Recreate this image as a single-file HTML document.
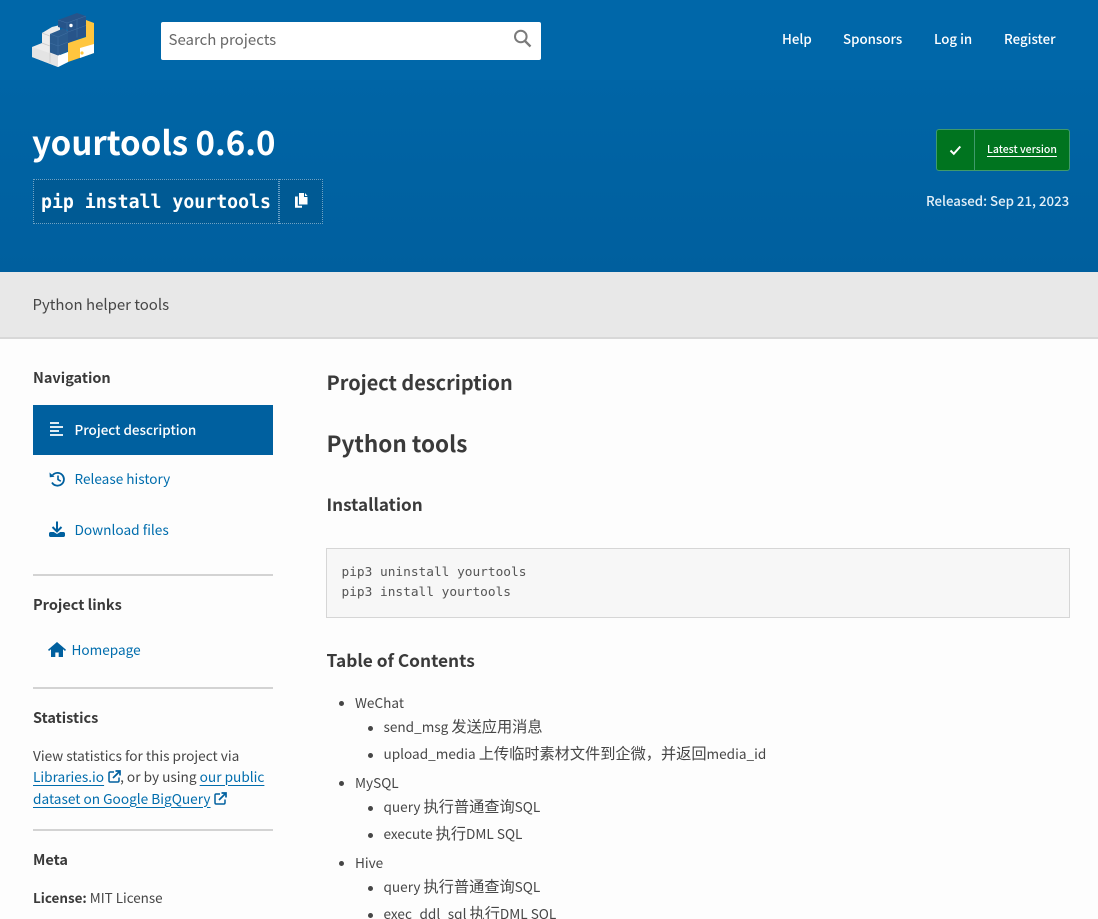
<!DOCTYPE html>
<html lang="en"><head><meta charset="utf-8"><title>yourtools</title>
<style>
html,body{margin:0;padding:0;width:1098px;height:919px;overflow:hidden;background:#fdfdfd}
body{position:relative;font-family:"Noto Sans CJK SC","Liberation Sans",sans-serif;color:#464646}
.t{position:absolute;white-space:nowrap;line-height:24px;height:24px}
.abs{position:absolute}
.b{font-weight:700}
.link{color:#006dad}
.nav{color:#fff;font-size:13.300px;font-weight:500;top:27px}
.side{font-size:14.500px;font-weight:700;color:#3a3a3a}
.li{font-size:13.600px;color:#464646}
.c{font-size:15.200px}
.hr{position:absolute;left:33px;width:240px;height:2px;background:#d3d3d3}
.dot{position:absolute;width:5px;height:5px;border-radius:50%;background:#464646}
u{text-underline-offset:3px;text-decoration-thickness:1px}
</style></head><body>
<div class="abs" style="left:0;top:0;width:1098px;height:80px;background:#0067a9"></div>
<div class="abs" style="left:0;top:80px;width:1098px;height:192px;background:linear-gradient(#0065a6,#005f9e)"></div>
<div class="abs" style="left:0;top:272px;width:1098px;height:65px;background:#e8e8e8"></div>
<div class="abs" style="left:0;top:337px;width:1098px;height:2px;background:#d8d8d8"></div>

<svg class="abs" style="left:28px;top:8px" width="70" height="64" viewBox="28 8 70 64">
<polygon points="32,47 42,43 42,33 52,27 60,25 60,55 68,52 68,62 58,67 32,57" fill="#ececec"/>
<polygon points="32,47 58,56 58,67 32,57" fill="#e4e4e4"/>
<polygon points="58,56 68,52 68,62 58,67" fill="#fff"/>
<path d="M42 43l8 3v17M42 33l8 3v10" stroke="#c9c9c9" stroke-width=".7" fill="none"/>
<polygon points="86,20 94,23 94,53 68,62 68,43 86,37" fill="#ffc63f"/>
<polygon points="80,48 94,44 94,53 80,58" fill="#fff"/>
<polygon points="58,20 77,13 86,16 86,36 68,43 68,30 58,27" fill="#27548a"/>
<polygon points="50,34 63,28.500 68,31 68,51 58,55.500 50,52.500" fill="#2b5b8e"/>
<path d="M50 34l8 3v18M58 37l10-4.500M50 43l8 3 10-4M58 20l9 3v9M67 23l19-7M77 19.500v18M68 32l18-6.500" stroke="#4172a5" stroke-width=".5" fill="none"/>
<circle cx="71" cy="25.500" r="1.700" fill="#fff"/><circle cx="82" cy="53" r="1.600" fill="#ffc63f"/>
</svg>

<div class="abs" style="left:161px;top:22px;width:380px;height:38px;background:#fff;border-radius:2px"></div>
<div class="t" style="left:168.500px;top:27.500px;font-size:15px;color:#686868">Search projects</div>
<svg class="abs" style="left:513px;top:29px" width="19" height="19" viewBox="0 0 19 19"><circle cx="7.800" cy="7.500" r="5.800" fill="none" stroke="#7b7b7b" stroke-width="2"/><path d="M12 12l5.500 5.500" stroke="#7b7b7b" stroke-width="2.300"/></svg>

<div class="t nav" style="left:782px">Help</div>
<div class="t nav" style="left:843px">Sponsors</div>
<div class="t nav" style="left:934px">Log in</div>
<div class="t nav" style="left:1004px">Register</div>

<div class="t b" style="left:32px;top:121px;height:40px;line-height:40px;font-size:33px;color:#fff;font-weight:700">yourtools 0.6.0</div>

<div class="abs" style="left:33px;top:179px;width:246px;height:45px;background:#005a94;border:1px dotted #6fa3c7;box-sizing:border-box"></div>
<div class="abs" style="left:279px;top:179px;width:44px;height:45px;background:#005a94;border:1px dotted #6fa3c7;box-sizing:border-box"></div>
<div class="t" style="left:41px;top:191px;font-family:'DejaVu Sans Mono',monospace;font-size:18.200px;font-weight:700;color:#fff">pip install yourtools</div>
<svg class="abs" style="left:294px;top:193px" width="14" height="16" viewBox="0 0 14 16"><path d="M5 0h5v4h3.500v7.500H5z" fill="#fff"/><path d="M11 0l2.500 3H11z" fill="#fff"/><path d="M3.800 3.500H1v11.200h7V12.800H3.800z" fill="#fff"/></svg>

<div class="abs" style="left:936px;top:129px;width:134px;height:42px;background:#00741f;border:1px solid #3f9a6b;box-sizing:border-box;border-radius:3px"></div>
<div class="abs" style="left:974px;top:130px;width:1px;height:40px;background:#3f9a6b"></div>
<svg class="abs" style="left:949px;top:144px" width="13" height="12" viewBox="0 0 13 12"><path d="M1.500 6.500l3.300 3.300 6.500-7.300" fill="none" stroke="#fff" stroke-width="2"/></svg>
<div class="t" style="left:987px;top:137.500px;font-size:10.500px;color:#fff;font-weight:500"><u>Latest version</u></div>
<div class="t" style="left:926px;top:188.500px;font-size:13.250px;color:#e4f0f8;font-weight:500">Released: Sep 21, 2023</div>

<div class="t" style="left:32.500px;top:293px;font-size:14.960px;color:#464646">Python helper tools</div>

<div class="t side" style="left:33px;top:365.500px">Navigation</div>
<div class="abs" style="left:33px;top:405px;width:240px;height:50px;background:#00609f"></div>
<svg class="abs" style="left:50px;top:422px" width="15" height="14" viewBox="0 0 15 14"><path d="M0 1h9M0 5h13M0 9h9M0 13h13" stroke="#fff" stroke-width="1.700"/></svg>
<div class="t" style="left:74.500px;top:417px;font-size:13.440px;color:#fff;font-weight:500">Project description</div>

<svg class="abs" style="left:49px;top:471px" width="17" height="16" viewBox="0 0 17 16"><path d="M3.600 4.200A6.400 6.400 0 1 1 3 11.500" fill="none" stroke="#00609f" stroke-width="1.800"/><path d="M0.500 1.500l.3 4.700 4.700-.4z" fill="#00609f"/><path d="M9 4.500v4l2.800 1.700" fill="none" stroke="#00609f" stroke-width="1.600"/></svg>
<div class="t link" style="left:74.500px;top:466px;font-size:13.600px">Release history</div>

<svg class="abs" style="left:49px;top:521px" width="16" height="17" viewBox="0 0 16 17"><path d="M8 0.500v9" stroke="#00609f" stroke-width="2"/><path d="M3.500 6l4.500 4.500L12.500 6" fill="none" stroke="#00609f" stroke-width="2"/><path d="M1.500 11h3.300l3.200 2 3.200-2h3.300c.8 0 1.500.7 1.500 1.500v2c0 .8-.7 1.500-1.500 1.500h-13C.7 16 0 15.300 0 14.500v-2C0 11.700.7 11 1.500 11z" fill="#00609f"/></svg>
<div class="t link" style="left:74.500px;top:516.500px;font-size:13.700px">Download files</div>

<div class="hr" style="top:574px"></div>
<div class="t side" style="left:33px;top:593px">Project links</div>
<svg class="abs" style="left:48px;top:642px" width="18" height="15" viewBox="0 0 18 15"><path d="M9 0L0 7.800l1 1.200 2-1.700V15h4.300v-4.500h3.400V15H15V7.300l2 1.700 1-1.200z" fill="#00609f"/></svg>
<div class="t link" style="left:71.500px;top:636.500px;font-size:13.600px">Homepage</div>

<div class="hr" style="top:687px"></div>
<div class="t side" style="left:33px;top:706px">Statistics</div>
<div class="t li" style="left:33px;top:742.500px;font-size:13.670px">View statistics for this project via</div>
<div class="t li" style="left:33px;top:763.500px;font-size:13.670px"><span class="link"><u>Libraries.io<span style="display:inline-block;width:16px"></span></u></span>, or by using <span class="link"><u>our public</u></span></div>
<div class="t link" style="left:33px;top:785.500px;font-size:13.670px"><u>dataset on Google BigQuery<span style="display:inline-block;width:18px"></span></u></div>
<svg class="abs" style="left:108px;top:770px" width="13" height="13" viewBox="0 0 13 13"><path d="M6 2H2.200C1.500 2 1 2.500 1 3.200v7.600C1 11.500 1.500 12 2.200 12h7.600c.7 0 1.200-.5 1.200-1.200V7.500" fill="none" stroke="#00609f" stroke-width="1.500"/><path d="M5 8l6-6M7.500 1H12v4.500" fill="none" stroke="#00609f" stroke-width="1.700"/></svg>
<svg class="abs" style="left:214px;top:792px" width="13" height="13" viewBox="0 0 13 13"><path d="M6 2H2.200C1.500 2 1 2.500 1 3.200v7.600C1 11.500 1.500 12 2.200 12h7.600c.7 0 1.200-.5 1.200-1.200V7.500" fill="none" stroke="#00609f" stroke-width="1.500"/><path d="M5 8l6-6M7.500 1H12v4.500" fill="none" stroke="#00609f" stroke-width="1.700"/></svg>

<div class="hr" style="top:829px"></div>
<div class="t side" style="left:33px;top:848px">Meta</div>
<div class="t li" style="left:33px;top:884.500px;font-size:13.450px"><span class="b" style="color:#3a3a3a">License:</span> MIT License</div>

<div class="t b" style="left:326.500px;top:369.500px;font-size:19.900px;color:#3a3a3a">Project description</div>
<div class="t b" style="left:326.500px;top:431px;font-size:22.500px;color:#3a3a3a">Python tools</div>
<div class="t b" style="left:326.500px;top:491.500px;font-size:17.100px;color:#3a3a3a">Installation</div>

<div class="abs" style="left:326px;top:548px;width:744px;height:70px;background:#f7f7f7;border:1px solid #d6d6d6;box-sizing:border-box"></div>
<div class="t" style="left:341.500px;top:561px;font-family:'DejaVu Sans Mono',monospace;font-size:12.800px;color:#555">pip3 uninstall yourtools</div>
<div class="t" style="left:341.500px;top:581px;font-family:'DejaVu Sans Mono',monospace;font-size:12.800px;color:#555">pip3 install yourtools</div>

<div class="t b" style="left:326.500px;top:648px;font-size:17.300px;color:#3a3a3a">Table of Contents</div>

<div class="dot" style="left:339px;top:701px"></div><div class="t li" style="left:355px;top:690px">WeChat</div>
<div class="dot" style="left:368px;top:726px"></div><div class="t li" style="left:383.500px;top:714px">send_msg <span class="c">发送应用消息</span></div>
<div class="dot" style="left:368px;top:753px"></div><div class="t li" style="left:383.500px;top:741px">upload_media <span class="c">上传临时素材文件到企微，并返回</span>media_id</div>
<div class="dot" style="left:339px;top:781px"></div><div class="t li" style="left:355px;top:770px">MySQL</div>
<div class="dot" style="left:368px;top:806px"></div><div class="t li" style="left:383.500px;top:794px">query <span class="c">执行普通查询</span>SQL</div>
<div class="dot" style="left:368px;top:833px"></div><div class="t li" style="left:383.500px;top:821px">execute <span class="c">执行</span>DML SQL</div>
<div class="dot" style="left:339px;top:861px"></div><div class="t li" style="left:355px;top:850px">Hive</div>
<div class="dot" style="left:368px;top:886px"></div><div class="t li" style="left:383.500px;top:874px">query <span class="c">执行普通查询</span>SQL</div>
<div class="dot" style="left:368px;top:913px"></div><div class="t li" style="left:383.500px;top:901px">exec_ddl_sql <span class="c">执行</span>DML SQL</div>
</body></html>
